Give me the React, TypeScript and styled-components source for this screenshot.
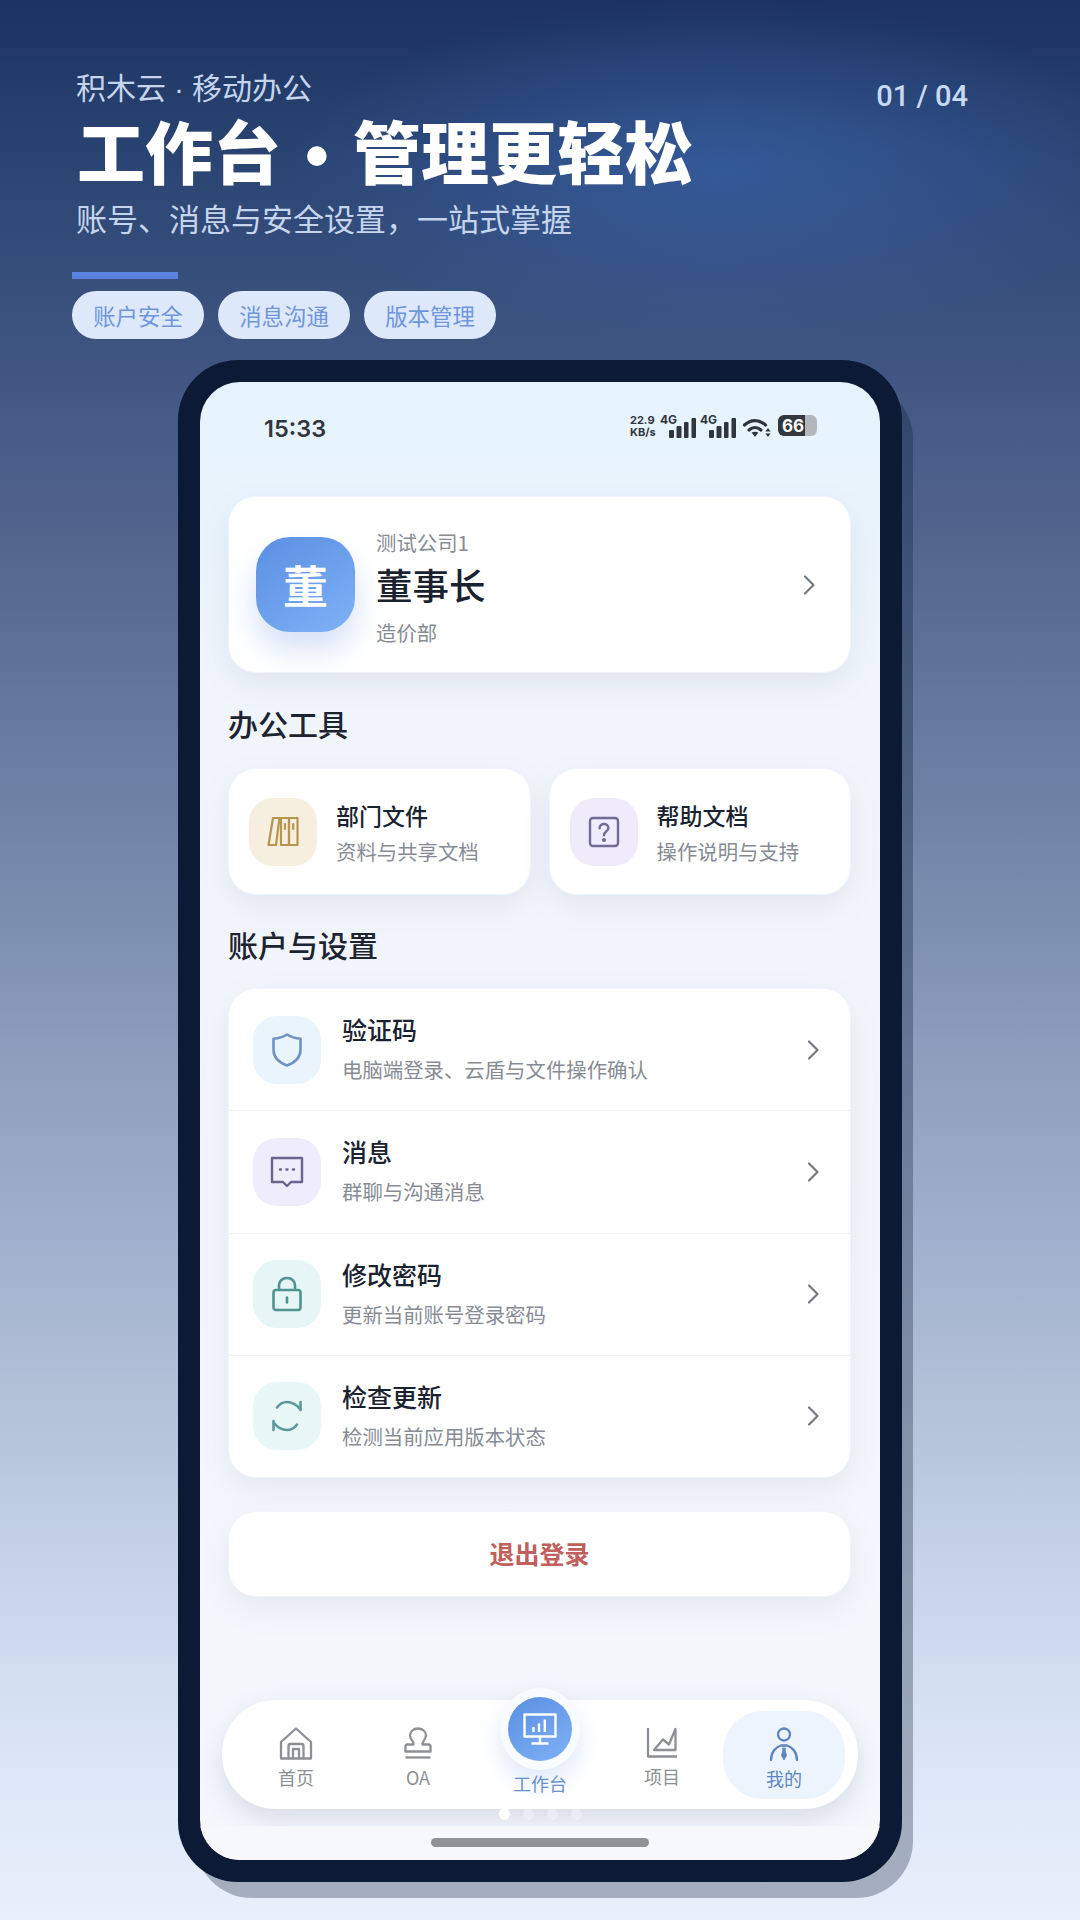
import styled, { createGlobalStyle } from "styled-components";

const GlobalStyle = createGlobalStyle`
  html, body {
    margin: 0;
    padding: 0;
    width: 1080px;
    height: 1920px;
    overflow: hidden;
    font-family: "Noto Sans CJK SC", "Noto Sans", sans-serif;
  }
  * { box-sizing: border-box; }
`;

const Page = styled.div`
  width: 1080px;
  height: 1920px;
  padding-top: 68px;
  overflow: hidden;
  background:
    radial-gradient(ellipse 430px 170px at 720px 170px, rgba(58, 102, 175, 0.62), rgba(58, 102, 175, 0)),
    linear-gradient(180deg, #1c3260 0%, #2a4472 8%, #3e5480 18%, #51658d 28%, #6f82a6 42%, #8fa0bf 56%, #acbad3 70%, #cbd8ec 84%, #e0e9f8 94%, #e8f0fc 100%);
`;

const Header = styled.header`
  padding-left: 72px;
`;

const TopRow = styled.div`
  display: flex;
  justify-content: space-between;
  align-items: flex-start;
  padding-right: 112px;
`;

const Eyebrow = styled.div`
  margin-left: 4px;
  font-size: 30px;
  line-height: 36px;
  color: #c5d5ee;
`;

const InlineDot = styled.span<{ $width: number }>`
  display: inline-block;
  width: ${(p) => p.$width}px;
  text-align: center;
  font-family: "Liberation Sans", sans-serif;
`;

const PageCount = styled.div`
  margin-top: 13px;
  font-family: "Roboto", "Liberation Sans", sans-serif;
  font-size: 29px;
  line-height: 30px;
  font-weight: 500;
  color: #c9daf6;
`;

const Title = styled.h1`
  margin: 1px 0 0 5px;
  font-size: 68px;
  line-height: 76px;
  font-weight: 900;
  color: #ffffff;
  white-space: nowrap;
`;

const Subtitle = styled.div`
  margin: 5px 0 0 4px;
  font-size: 31px;
  line-height: 40px;
  color: #c5d5ee;
`;

const AccentBar = styled.div`
  width: 106px;
  height: 7px;
  margin-top: 34px;
  background: #5b82dc;
`;

const ChipRow = styled.div`
  display: flex;
  gap: 14px;
  margin-top: 12px;
`;

const Chip = styled.span`
  width: 132px;
  height: 48px;
  display: flex;
  align-items: center;
  justify-content: center;
  border-radius: 24px;
  background: #dde9fb;
  color: #6f95dc;
  font-size: 22.400px;
`;

const PhoneFrame = styled.div`
  width: 724px;
  height: 1522px;
  margin: 21px 0 0 178px;
  padding: 22px;
  border-radius: 60px;
  background: #0c1a35;
  box-shadow: 14px 19px 0 -3px rgba(12, 26, 53, 0.3);
`;

const Screen = styled.div`
  position: relative;
  height: 1478px;
  display: flex;
  flex-direction: column;
  overflow: hidden;
  border-radius: 40px;
  background: linear-gradient(180deg, #e6f3fd 0%, #e9f3fc 10%, #f0f5fb 22%, #f5f7fc 100%);
`;

const StatusBar = styled.div`
  height: 114px;
  flex-shrink: 0;
  display: flex;
  justify-content: space-between;
  align-items: flex-start;
  padding: 29px 63px 0 64px;
  color: #31363e;
`;

const Clock = styled.div`
  font-family: "Inter", "Liberation Sans", sans-serif;
  font-size: 23.500px;
  line-height: 36px;
  font-weight: 600;
`;

const StatusIcons = styled.div`
  display: flex;
  align-items: flex-start;
  margin-top: 4px;
  height: 24px;
`;

const Speed = styled.div`
  width: 30px;
  font-family: "Inter", "Liberation Sans", sans-serif;
  font-size: 11px;
  line-height: 11.500px;
  font-weight: 700;
  white-space: nowrap;
`;

const SignalWrap = styled.div`
  position: relative;
  width: 40px;
  height: 23px;
`;

const SignalLabel = styled.span`
  position: absolute;
  left: 0;
  top: -1px;
  font-family: "Inter", "Liberation Sans", sans-serif;
  font-size: 12px;
  line-height: 12px;
  font-weight: 700;
`;

const SignalBars = styled.svg`
  position: absolute;
  right: 4px;
  bottom: 0;
`;

const Battery = styled.div`
  width: 39px;
  height: 21px;
  margin-left: 7px;
  display: flex;
  align-items: center;
  justify-content: center;
  padding-right: 9px;
  border-radius: 6px;
  background: linear-gradient(90deg, #33383f 0 70%, #b3b6bb 70% 100%);
  color: #ffffff;
  font-family: "Inter", "Liberation Sans", sans-serif;
  font-size: 17px;
  font-weight: 700;
`;

const Content = styled.div`
  padding: 0 29px 0 28px;
`;

const Card = styled.div`
  background: #ffffff;
  border: 1px solid #f1f5fb;
  box-shadow: 0 12px 30px rgba(96, 116, 150, 0.1);
`;

const ProfileCard = styled(Card)`
  height: 177px;
  display: flex;
  align-items: center;
  padding: 0 34px 0 27px;
  border-radius: 28px;
`;

const Avatar = styled.div`
  width: 99px;
  height: 95px;
  flex-shrink: 0;
  display: flex;
  align-items: center;
  justify-content: center;
  border-radius: 34px;
  background: linear-gradient(145deg, #5a8fe2, #7fb1f6);
  box-shadow: 0 18px 30px rgba(91, 143, 226, 0.26);
  color: #ffffff;
  font-size: 45px;
  font-weight: 700;
`;

const ProfileText = styled.div`
  flex: 1;
  margin-left: 21px;
  padding-top: 4px;
  display: flex;
  flex-direction: column;
`;

const Muted = styled.div`
  font-size: 20.400px;
  line-height: 28px;
  color: #878c94;
  white-space: nowrap;
`;

const RoleName = styled.div`
  margin: 6px 0 10px;
  font-size: 36.500px;
  line-height: 46px;
  font-weight: 500;
  color: #1a2230;
`;

const SectionTitle = styled.h2<{ $top: number }>`
  margin: ${(p) => p.$top}px 0 0;
  font-size: 30px;
  line-height: 40px;
  font-weight: 500;
  color: #1c2430;
`;

const ToolGrid = styled.div`
  display: grid;
  grid-template-columns: 1fr 1fr;
  gap: 18px;
  margin-top: 25px;
`;

const ToolCard = styled(Card)`
  height: 127px;
  display: flex;
  align-items: center;
  gap: 19px;
  padding: 0 20px 0 20px;
  border-radius: 28px;
`;

const IconBox = styled.div<{ $bg: string }>`
  width: 68px;
  height: 68px;
  flex-shrink: 0;
  display: flex;
  align-items: center;
  justify-content: center;
  border-radius: 24px;
  background: ${(p) => p.$bg};
`;

const ItemTitle = styled.div<{ $size: number }>`
  font-size: ${(p) => p.$size}px;
  line-height: 32px;
  font-weight: 500;
  color: #1a2230;
`;

const ItemText = styled.div<{ $gap: number }>`
  display: flex;
  flex-direction: column;
  gap: ${(p) => p.$gap}px;
`;

const SettingsCard = styled(Card)`
  height: 490px;
  margin-top: 24px;
  display: flex;
  flex-direction: column;
  border-radius: 28px;
  overflow: hidden;
`;

const SettingsRow = styled.div`
  flex: 1;
  display: flex;
  align-items: center;
  gap: 21px;
  padding: 0 30px 0 24px;
  & + & {
    border-top: 1px solid #eceff4;
  }
`;

const RowBody = styled(ItemText)`
  flex: 1;
  padding-bottom: 3px;
`;

const Logout = styled(Card)`
  height: 86px;
  margin-top: 33px;
  padding-bottom: 3px;
  display: flex;
  align-items: center;
  justify-content: center;
  border-radius: 28px;
  color: #c05f5b;
  font-size: 25px;
  font-weight: 700;
`;

const Spacer = styled.div`
  flex: 1;
`;

const TabBar = styled.nav`
  position: relative;
  height: 109px;
  margin: 0 22px 17px;
  padding: 0 13px;
  flex-shrink: 0;
  display: grid;
  grid-template-columns: repeat(5, 1fr);
  align-items: center;
  border-radius: 54px;
  background: #ffffff;
  box-shadow: 0 10px 26px rgba(96, 116, 150, 0.2);
`;

const TabItem = styled.div<{ $active?: boolean }>`
  height: 88px;
  display: flex;
  flex-direction: column;
  align-items: center;
  padding-top: 16px;
  gap: 7px;
  border-radius: 40px;
  background: ${(p) => (p.$active ? "#edf4fe" : "transparent")};
`;

const TabLabel = styled.div<{ $color: string }>`
  font-size: 18px;
  line-height: 20px;
  color: ${(p) => p.$color};
`;

const CenterTab = styled(TabItem)`
  position: relative;
  padding-top: 62px;
`;

const CenterRing = styled.div`
  position: absolute;
  left: 21px;
  top: -23px;
  width: 80px;
  height: 82px;
  display: flex;
  align-items: center;
  justify-content: center;
  border-radius: 50%;
  background: #f8fbff;
  box-shadow: 0 12px 24px rgba(91, 143, 226, 0.2);
`;

const CenterDisc = styled.div`
  width: 64px;
  height: 64px;
  display: flex;
  align-items: center;
  justify-content: center;
  border-radius: 50%;
  background: linear-gradient(145deg, #5a8fe2, #7fb1f6);
`;

const Dots = styled.div`
  position: absolute;
  left: 277px;
  bottom: -11px;
  display: flex;
  gap: 13px;
`;

const Dot = styled.span<{ $on?: boolean }>`
  width: 11px;
  height: 12px;
  border-radius: 50%;
  background: ${(p) => (p.$on ? "#ffffff" : "rgba(255, 255, 255, 0.3)")};
`;

const HomeStrip = styled.div`
  position: relative;
  height: 34px;
  flex-shrink: 0;
  display: flex;
  justify-content: center;
  padding-top: 12px;
  background: #f6f8fc;
`;

const HomeBar = styled.div`
  width: 218px;
  height: 9px;
  border-radius: 5px;
  background: #909296;
`;

const Chevron = ({ color = "#757a81" }: { color?: string }) => (
  <svg width="14" height="22" viewBox="0 0 14 22" fill="none">
    <path d="M3 2.500l8.500 8.500L3 19.500" stroke={color} strokeWidth="2.200" strokeLinecap="round" strokeLinejoin="round" />
  </svg>
);

const Bars = () => (
  <SignalBars width="27" height="20" viewBox="0 0 27 20">
    <rect x="0" y="12" width="5" height="8" rx="1" fill="#31363e" />
    <rect x="7.500" y="8" width="5" height="12" rx="1" fill="#31363e" />
    <rect x="15" y="4" width="4.500" height="16" rx="1" fill="#31363e" />
    <rect x="22.500" y="0" width="4.500" height="20" rx="1" fill="#31363e" />
  </SignalBars>
);

const Wifi = () => (
  <svg width="28" height="20" viewBox="0 0 28 20" fill="none" style={{ marginLeft: 3, marginTop: 3 }}>
    <path d="M1.500 7C8 1.200 16 1.200 22.500 7" stroke="#31363e" strokeWidth="3.200" strokeLinecap="round" />
    <path d="M6 12c3.600-3.200 8.400-3.200 12 0" stroke="#31363e" strokeWidth="3.200" strokeLinecap="round" />
    <path d="M8.600 14.600L12 19l3.400-4.400c-2-1.300-4.800-1.300-6.800 0z" fill="#31363e" />
    <path d="M25 10l2.600 3.400h-5.200zM25 19l-2.600-3.400h5.200z" fill="#31363e" />
  </svg>
);

const BooksIcon = () => (
  <svg width="32" height="31" viewBox="0 0 32 31" fill="none" stroke="#b8954e" strokeWidth="2.200" strokeLinejoin="round">
    <path d="M6 2h6.500L9 29H1.500z" />
    <rect x="14" y="2" width="8" height="27" />
    <rect x="22" y="2" width="8.500" height="27" />
    <path d="M18 8v5M26.200 8v5" strokeLinecap="round" />
  </svg>
);

const HelpIcon = () => (
  <svg width="32" height="32" viewBox="0 0 32 32" fill="none" stroke="#6f6a96" strokeWidth="2.400" strokeLinecap="round">
    <rect x="2" y="2" width="28" height="28" rx="3" />
    <path d="M11.600 12.200c0-2.600 2-4.200 4.400-4.200s4.400 1.600 4.400 3.900c0 3.600-4.400 3.400-4.400 7.300" />
    <circle cx="16" cy="24" r="0.900" fill="#6f6a96" />
  </svg>
);

const ShieldIcon = () => (
  <svg width="32" height="36" viewBox="0 0 32 36" fill="none" stroke="#6f93c2" strokeWidth="2.600" strokeLinejoin="round">
    <path d="M16 2.500c4 2.600 8.500 3.900 13.500 4.300v11c0 7.200-5 12.600-13.500 15.700C7.500 30.400 2.500 25 2.500 17.800v-11C7.500 6.400 12 5.100 16 2.500z" />
  </svg>
);

const MessageIcon = () => (
  <svg width="34" height="32" viewBox="0 0 34 32" fill="none" stroke="#6a6590" strokeWidth="2.400" strokeLinejoin="round">
    <path d="M2 2h30v24H21l-4 4-4-4H2z" />
    <path d="M10 13.500h1M16.500 13.500h1M23 13.500h1" strokeLinecap="round" />
  </svg>
);

const LockIcon = () => (
  <svg width="32" height="36" viewBox="0 0 32 36" fill="none" stroke="#4f9490" strokeWidth="2.600" strokeLinejoin="round">
    <rect x="2.500" y="14" width="27" height="20" rx="2.500" />
    <path d="M8 14V9.500C8 5 11.500 2 16 2s8 3 8 7.500V14" />
    <path d="M16 21.500v5" strokeLinecap="round" />
  </svg>
);

const RefreshIcon = () => (
  <svg width="32" height="34" viewBox="0 0 32 34" fill="none" stroke="#5a9a9a" strokeWidth="2.600" strokeLinecap="round" strokeLinejoin="round">
    <path d="M6 8.500C8.500 5 12 3 16 3c5 0 9.500 2.500 13 7" />
    <path d="M29.500 3v8" />
    <path d="M26 25.500C23.500 29 20 31 16 31c-5 0-9.500-2.500-13-7" />
    <path d="M2.500 31v-9" />
  </svg>
);

const HouseIcon = () => (
  <svg width="34" height="33" viewBox="0 0 34 33" fill="none" stroke="#8c8f94" strokeWidth="2.300" strokeLinejoin="round">
    <path d="M2 15L17 1.500 32 15v16.500H2z" />
    <path d="M9.500 31.500V19a2 2 0 012-2h11a2 2 0 012 2v12.500" />
    <path d="M14 31.500V22h6v9.500" />
  </svg>
);

const StampIcon = () => (
  <svg width="28" height="33" viewBox="0 0 28 33" fill="none" stroke="#8c8f94" strokeWidth="2.300" strokeLinejoin="round">
    <path d="M3 17.500h6.500c1-3-3.500-4.500-3.500-9C6 4.500 9.500 1.500 14 1.500S22 4.500 22 8.500c0 4.500-4.500 6-3.500 9H25a1.500 1.500 0 011.500 1.500v5.500h-25V19A1.500 1.500 0 013 17.500z" />
    <path d="M1.500 30.500h25" />
  </svg>
);

const ChartIcon = () => (
  <svg width="32" height="32" viewBox="0 0 32 32" fill="none" stroke="#8c8f94" strokeWidth="2.300" strokeLinejoin="round">
    <path d="M2 1v28.500h29" />
    <path d="M8 23L17 12.500l6 5L29.500 2V23z" />
  </svg>
);

const PersonIcon = () => (
  <svg width="32" height="34" viewBox="0 0 32 34" fill="none" stroke="#5b85c0" strokeWidth="2.300" strokeLinejoin="round">
    <circle cx="16" cy="7.500" r="6" />
    <path d="M3 33c0-7.500 4.500-13 10-14.500h6c5.500 1.500 10 7 10 14.500" strokeLinecap="round" />
    <path d="M14.500 21h3l-0.500 2.500 1.500 5-2.500 4.500-2.500-4.500 1.500-5z" fill="#5b85c0" strokeWidth="0.800" />
  </svg>
);

const MonitorIcon = () => (
  <svg width="34" height="32" viewBox="0 0 34 32" fill="none" stroke="#ffffff" strokeWidth="2.400" strokeLinejoin="round">
    <rect x="1.500" y="1.500" width="31" height="22" />
    <path d="M17 24v6M8.500 30.500h17" />
    <path d="M10.500 19v-5M16 19v-8.500M21.800 19V6.500" />
  </svg>
);

const tools = [
  { title: "部门文件", desc: "资料与共享文档", bg: "#f6efdf", icon: <BooksIcon /> },
  { title: "帮助文档", desc: "操作说明与支持", bg: "#efebfb", icon: <HelpIcon /> },
];

const settings = [
  { title: "验证码", desc: "电脑端登录、云盾与文件操作确认", bg: "#eaf4fd", icon: <ShieldIcon /> },
  { title: "消息", desc: "群聊与沟通消息", bg: "#efecfb", icon: <MessageIcon /> },
  { title: "修改密码", desc: "更新当前账号登录密码", bg: "#e6f5f5", icon: <LockIcon /> },
  { title: "检查更新", desc: "检测当前应用版本状态", bg: "#e8f6f6", icon: <RefreshIcon /> },
];

export default function App() {
  return (
    <Page>
      <GlobalStyle />
      <Header>
        <TopRow>
          <Eyebrow>
            积木云
            <InlineDot $width={26}>·</InlineDot>
            移动办公
          </Eyebrow>
          <PageCount>01 / 04</PageCount>
        </TopRow>
        <Title>
          工作台
          <InlineDot $width={72}>•</InlineDot>
          管理更轻松
        </Title>
        <Subtitle>账号、消息与安全设置，一站式掌握</Subtitle>
        <AccentBar />
        <ChipRow>
          <Chip>账户安全</Chip>
          <Chip>消息沟通</Chip>
          <Chip>版本管理</Chip>
        </ChipRow>
      </Header>
      <PhoneFrame>
        <Screen>
          <StatusBar>
            <Clock>15:33</Clock>
            <StatusIcons>
              <Speed>
                22.9
                <br />
                KB/s
              </Speed>
              <SignalWrap>
                <SignalLabel>4G</SignalLabel>
                <Bars />
              </SignalWrap>
              <SignalWrap>
                <SignalLabel>4G</SignalLabel>
                <Bars />
              </SignalWrap>
              <Wifi />
              <Battery>66</Battery>
            </StatusIcons>
          </StatusBar>
          <Content>
            <ProfileCard>
              <Avatar>董</Avatar>
              <ProfileText>
                <Muted>测试公司1</Muted>
                <RoleName>董事长</RoleName>
                <Muted>造价部</Muted>
              </ProfileText>
              <Chevron />
            </ProfileCard>
            <SectionTitle $top={30}>办公工具</SectionTitle>
            <ToolGrid>
              {tools.map((tool) => (
                <ToolCard key={tool.title}>
                  <IconBox $bg={tool.bg}>{tool.icon}</IconBox>
                  <ItemText $gap={6}>
                    <ItemTitle $size={23}>{tool.title}</ItemTitle>
                    <Muted>{tool.desc}</Muted>
                  </ItemText>
                </ToolCard>
              ))}
            </ToolGrid>
            <SectionTitle $top={29}>账户与设置</SectionTitle>
            <SettingsCard>
              {settings.map((row) => (
                <SettingsRow key={row.title}>
                  <IconBox $bg={row.bg}>{row.icon}</IconBox>
                  <RowBody $gap={10}>
                    <ItemTitle $size={25}>{row.title}</ItemTitle>
                    <Muted>{row.desc}</Muted>
                  </RowBody>
                  <Chevron />
                </SettingsRow>
              ))}
            </SettingsCard>
            <Logout>退出登录</Logout>
          </Content>
          <Spacer />
          <TabBar>
            <TabItem>
              <HouseIcon />
              <TabLabel $color="#8b8e93">首页</TabLabel>
            </TabItem>
            <TabItem>
              <StampIcon />
              <TabLabel $color="#8b8e93">OA</TabLabel>
            </TabItem>
            <CenterTab>
              <CenterRing>
                <CenterDisc>
                  <MonitorIcon />
                </CenterDisc>
              </CenterRing>
              <TabLabel $color="#6d90c8">工作台</TabLabel>
            </CenterTab>
            <TabItem>
              <ChartIcon />
              <TabLabel $color="#8b8e93">项目</TabLabel>
            </TabItem>
            <TabItem $active>
              <PersonIcon />
              <TabLabel $color="#5f85c0">我的</TabLabel>
            </TabItem>
            <Dots>
              <Dot $on />
              <Dot />
              <Dot />
              <Dot />
            </Dots>
          </TabBar>
          <HomeStrip>
            <HomeBar />
          </HomeStrip>
        </Screen>
      </PhoneFrame>
    </Page>
  );
}
